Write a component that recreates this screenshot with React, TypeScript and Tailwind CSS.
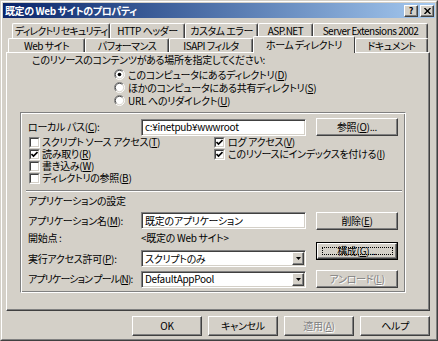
import React from "react";

function U({ c }: { c: string }) {
  return (
    <>
      (<span className="underline underline-offset-[1px]">{c}</span>)
    </>
  );
}

function Btn({
  children,
  className = "",
  disabled = false,
  def = false,
}: {
  children: React.ReactNode;
  className?: string;
  disabled?: boolean;
  def?: boolean;
}) {
  const inner = (
    <div
      className={`flex h-full w-full items-center justify-center border border-t-white border-l-white border-r-[#404040] border-b-[#404040] bg-[#d4d0c8] shadow-[inset_-1px_-1px_0_#808080] ${
        disabled ? "text-[#808080] [text-shadow:1px_1px_0_#ffffff]" : "text-black"
      }`}
    >
      {def ? (
        <div className="flex h-[calc(100%-6px)] w-[calc(100%-7px)] items-center justify-center border border-dotted border-black">
          {children}
        </div>
      ) : (
        children
      )}
    </div>
  );
  if (def) {
    return <div className={`border border-black ${className}`}>{inner}</div>;
  }
  return <div className={className}>{inner}</div>;
}

function Radio({ on }: { on?: boolean }) {
  return (
    <svg width="11" height="11" viewBox="0 0 12 12" className="shrink-0">
      <circle cx="6" cy="6" r="5" fill="#ffffff" />
      <path d="M2.1 9.9 A5.5 5.5 0 0 1 9.9 2.1" stroke="#808080" fill="none" strokeWidth="1" />
      <path d="M9.9 2.1 A5.5 5.5 0 0 1 2.1 9.9" stroke="#ffffff" fill="none" strokeWidth="1" />
      <path d="M2.8 9.2 A4.5 4.5 0 0 1 9.2 2.8" stroke="#404040" fill="none" strokeWidth="1" />
      <path d="M9.2 2.8 A4.5 4.5 0 0 1 2.8 9.2" stroke="#d4d0c8" fill="none" strokeWidth="1" />
      {on && <circle cx="6" cy="6" r="2" fill="#000000" />}
    </svg>
  );
}

function Check({ on }: { on?: boolean }) {
  return (
    <div className="h-[11px] w-[11px] shrink-0 border border-t-[#808080] border-l-[#808080] border-r-white border-b-white">
      <div className="flex h-full w-full items-center justify-center border border-t-[#404040] border-l-[#404040] border-r-[#d4d0c8] border-b-[#d4d0c8] bg-white">
        {on && (
          <svg width="7" height="7" viewBox="0 0 7 7">
            <path d="M0.5 3 L2.5 5 L6.5 1" stroke="#000" strokeWidth="1.6" fill="none" />
          </svg>
        )}
      </div>
    </div>
  );
}

function Edit({ children, className = "" }: { children?: React.ReactNode; className?: string }) {
  return (
    <div
      className={`flex items-center border border-t-[#808080] border-l-[#808080] border-r-white border-b-white bg-white pl-[3px] shadow-[inset_1px_1px_0_#404040,inset_-1px_-1px_0_#d4d0c8] ${className}`}
    >
      {children}
    </div>
  );
}

function Select({ children, className = "" }: { children?: React.ReactNode; className?: string }) {
  return (
    <div
      className={`flex items-center border border-t-[#808080] border-l-[#808080] border-r-white border-b-white bg-white shadow-[inset_1px_1px_0_#404040,inset_-1px_-1px_0_#d4d0c8] ${className}`}
    >
      <div className="flex-1 pl-[3px]">{children}</div>
      <div className="mr-[1px] flex h-[13px] w-[12px] items-center justify-center border border-t-white border-l-white border-r-[#404040] border-b-[#404040] bg-[#d4d0c8] shadow-[inset_-1px_-1px_0_#808080]">
        <svg width="5" height="3" viewBox="0 0 5 3">
          <path d="M0 0 H5 L2.5 3 Z" fill="#000" />
        </svg>
      </div>
    </div>
  );
}

function Tab({ children, className = "" }: { children: React.ReactNode; className?: string }) {
  return (
    <div
      className={`flex h-full items-center justify-center whitespace-nowrap rounded-t-[2px] border-t border-l border-r border-t-white border-l-white border-r-[#404040] bg-[#d4d0c8] shadow-[inset_-1px_0_0_#808080] ${className}`}
    >
      {children}
    </div>
  );
}

export default function App() {
  return (
    <div className="h-[341px] w-[438px] border border-t-[#d4d0c8] border-l-[#d4d0c8] border-r-[#404040] border-b-[#404040] bg-[#d4d0c8] font-['Noto_Sans_CJK_JP',sans-serif] text-[10px] leading-none tracking-[-0.3px] text-black [font-feature-settings:'palt']">
      <div className="flex h-full flex-col border border-t-white border-l-white border-r-[#808080] border-b-[#808080] p-[1px]">
        {/* Title bar */}
        <div className="flex h-[15px] shrink-0 items-center bg-linear-to-r from-[#0a246a] to-[#a6caf0] pl-[2px] pr-[1px]">
          <div className="flex-1 whitespace-nowrap text-[10px] font-bold tracking-[-0.4px] text-white">既定の Web サイトのプロパティ</div>
          <div className="flex items-center gap-[2px]">
            <div className="flex h-[12px] w-[14px] items-center justify-center border border-t-white border-l-white border-r-[#404040] border-b-[#404040] bg-[#d4d0c8] text-[9px] font-bold shadow-[inset_-1px_-1px_0_#808080]">
              ?
            </div>
            <div className="flex h-[12px] w-[14px] items-center justify-center border border-t-white border-l-white border-r-[#404040] border-b-[#404040] bg-[#d4d0c8] shadow-[inset_-1px_-1px_0_#808080]">
              <svg width="7" height="6" viewBox="0 0 7 6">
                <path d="M0.5 0 L6.5 6 M6.5 0 L0.5 6" stroke="#000" strokeWidth="1.4" />
              </svg>
            </div>
          </div>
        </div>

        {/* Body */}
        <div className="flex flex-1 flex-col pl-[3px] pr-[5px]">
          {/* Tabs */}
          <div className="mt-[5px] flex h-[15px] pl-[6px]">
            <Tab className="w-[98px] tracking-[-0.9px]">ディレクトリ セキュリティ</Tab>
            <Tab className="w-[75px] tracking-[-0.5px]">HTTP ヘッダー</Tab>
            <Tab className="w-[73px] tracking-[-0.5px]">カスタム エラー</Tab>
            <Tab className="w-[55px] tracking-[-0.5px]">ASP.NET</Tab>
            <Tab className="w-[115px] tracking-[-0.5px]">Server Extensions 2002</Tab>
          </div>
          <div className="flex h-[14px] items-end pl-[2px]">
            <Tab className="w-[77px] tracking-[-0.5px]">Web サイト</Tab>
            <Tab className="w-[84px] tracking-[-0.5px]">パフォーマンス</Tab>
            <Tab className="w-[84px] tracking-[-0.5px]">ISAPI フィルタ</Tab>
            <Tab className="relative top-[1px] z-10 h-[17px]! w-[102px] tracking-[-0.5px] shadow-none!">ホーム ディレクトリ</Tab>
            <Tab className="w-[73px] tracking-[-0.5px]">ドキュメント</Tab>
          </div>

          {/* Panel */}
          <div className="flex h-[259px] flex-col border border-t-white border-l-white border-r-[#404040] border-b-[#404040] shadow-[inset_-1px_-1px_0_#808080]">
            <div className="flex h-[14px] items-center whitespace-nowrap pl-[25px]">
              このリソースのコンテンツがある場所を指定してください:
            </div>
            <div className="mt-[1px] flex flex-col pl-[107px]">
              <div className="flex h-[13px] items-center gap-[3px]">
                <Radio on />
                <span>
                  このコンピュータにあるディレクトリ<U c="D" />
                </span>
              </div>
              <div className="flex h-[13px] items-center gap-[3px]">
                <Radio />
                <span>
                  ほかのコンピュータにある共有ディレクトリ<U c="S" />
                </span>
              </div>
              <div className="flex h-[13px] items-center gap-[3px]">
                <Radio />
                <span>
                  URL へのリダイレクト<U c="U" />
                </span>
              </div>
            </div>

            {/* Frame */}
            <div className="ml-[13px] mt-[5px] flex h-[181px] w-[386px] flex-col border border-t-[#808080] border-l-[#808080] border-r-white border-b-white shadow-[inset_1px_1px_0_#ffffff,inset_-1px_-1px_0_#808080]">
              <div className="mt-[5px] flex h-[18px] items-center pl-[7px]">
                <div className="w-[113px] whitespace-nowrap">
                  ローカル パス<U c="C" />:
                </div>
                <Edit className="h-[17px] w-[165px]">c:¥inetpub¥wwwroot</Edit>
                <Btn className="ml-[10px] h-[18px] w-[82px]">
                  参照<U c="O" />...
                </Btn>
              </div>

              <div className="grid grid-cols-[185px_1fr] pl-[8px]">
                <div className="flex flex-col">
                  <div className="flex h-[12px] items-center gap-[2px]">
                    <Check />
                    <span>
                      スクリプト ソース アクセス<U c="T" />
                    </span>
                  </div>
                  <div className="flex h-[12px] items-center gap-[2px]">
                    <Check on />
                    <span>
                      読み取り<U c="R" />
                    </span>
                  </div>
                  <div className="flex h-[12px] items-center gap-[2px]">
                    <Check />
                    <span>
                      書き込み<U c="W" />
                    </span>
                  </div>
                  <div className="flex h-[12px] items-center gap-[2px]">
                    <Check />
                    <span>
                      ディレクトリの参照<U c="B" />
                    </span>
                  </div>
                </div>
                <div className="flex flex-col">
                  <div className="flex h-[12px] items-center gap-[3px]">
                    <Check on />
                    <span>
                      ログ アクセス<U c="V" />
                    </span>
                  </div>
                  <div className="flex h-[12px] items-center gap-[3px]">
                    <Check on />
                    <span>
                      このリソースにインデックスを付ける<U c="I" />
                    </span>
                  </div>
                </div>
              </div>

              <div className="ml-[5px] mr-[3px] mt-[6px] border-t border-b border-t-[#808080] border-b-white" />

              <div className="mt-[3px] flex h-[12px] items-center pl-[7px]">アプリケーションの設定</div>

              <div className="mt-[4px] flex h-[19px] items-center pl-[7px]">
                <div className="w-[113px] whitespace-nowrap">
                  アプリケーション名<U c="M" />:
                </div>
                <Edit className="h-[17px] w-[165px]">既定のアプリケーション</Edit>
                <Btn className="ml-[10px] h-[18px] w-[82px]">
                  削除<U c="E" />
                </Btn>
              </div>

              <div className="mt-[2px] flex h-[12px] items-center pl-[7px]">
                <div className="w-[113px]">開始点 :</div>
                <div>&lt;既定の Web サイト&gt;</div>
              </div>

              <div className="mt-[-2px] flex h-[25px] pl-[7px]">
                <div className="flex h-[17px] items-center self-end">
                  <div className="w-[113px] whitespace-nowrap">
                    実行アクセス許可<U c="P" />:
                  </div>
                  <Select className="h-[17px] w-[165px]">スクリプトのみ</Select>
                </div>
                <Btn def className="ml-[10px] h-[18px] w-[82px] self-start">
                  構成<U c="G" />...
                </Btn>
              </div>

              <div className="mt-[3px] flex h-[18px] items-center pl-[7px]">
                <div className="w-[113px] whitespace-nowrap tracking-[-0.9px]">
                  アプリケーション プール<U c="N" />:
                </div>
                <Select className="h-[17px] w-[165px]">DefaultAppPool</Select>
                <Btn disabled className="ml-[10px] h-[18px] w-[82px]">
                  アンロード<U c="L" />
                </Btn>
              </div>
            </div>
          </div>

          {/* Bottom buttons */}
          <div className="mt-[5px] flex h-[20px] justify-end gap-[6px]">
            <Btn className="h-[20px] w-[70px]">OK</Btn>
            <Btn className="h-[20px] w-[70px]">キャンセル</Btn>
            <Btn disabled className="h-[20px] w-[70px]">
              適用<U c="A" />
            </Btn>
            <Btn className="h-[20px] w-[70px]">ヘルプ</Btn>
          </div>
        </div>
      </div>
    </div>
  );
}
